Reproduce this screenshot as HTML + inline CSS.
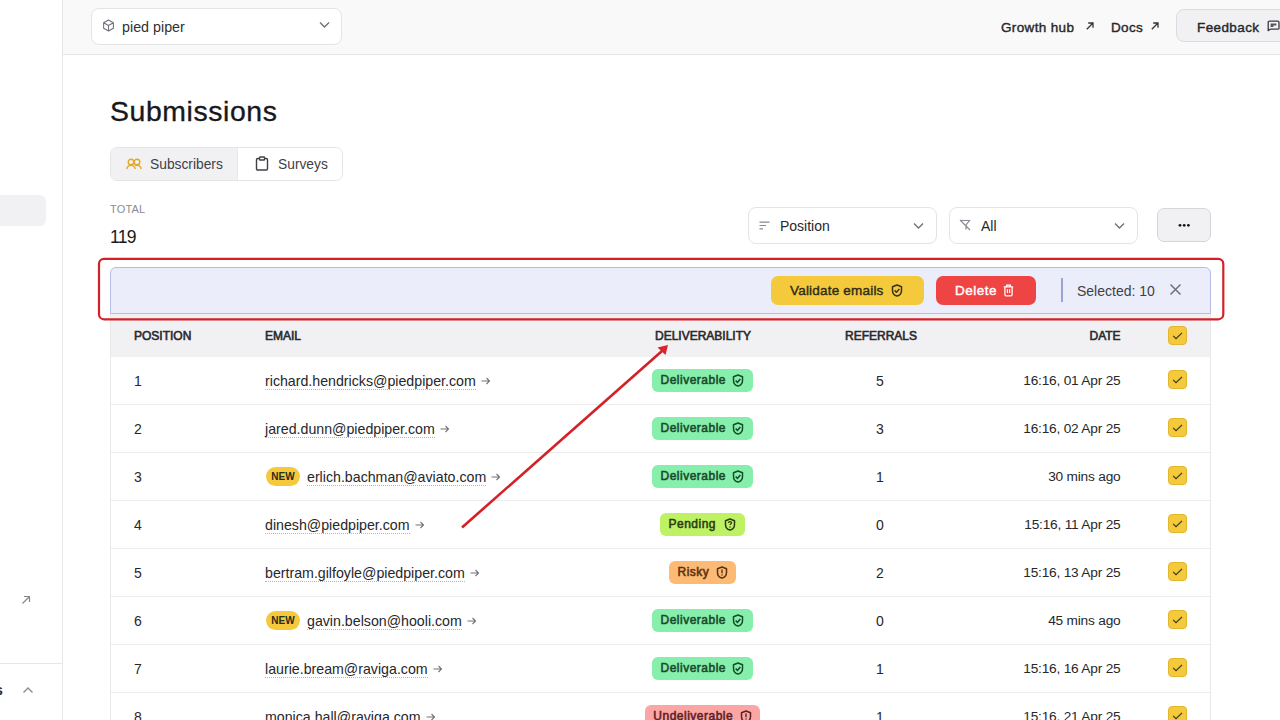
<!DOCTYPE html>
<html><head><meta charset="utf-8">
<style>
*{box-sizing:border-box;margin:0;padding:0}
html,body{width:1280px;height:720px;overflow:hidden;background:#fff;font-family:"Liberation Sans",sans-serif;color:#27272a}
.abs{position:absolute}
svg{display:block}
#sidebar{position:absolute;left:0;top:0;width:63px;height:720px;background:#fff;border-right:1px solid #e6e6e8;z-index:2}
#topbar{position:absolute;left:62px;top:0;width:1218px;z-index:1;height:55px;background:#f9f9f9;border-bottom:1px solid #e4e4e7}
.sel{position:absolute;background:#fff;border:1px solid #e4e4e7;border-radius:8px}
.txt{position:absolute;white-space:nowrap;line-height:1}
.hdr{position:absolute;white-space:nowrap;font-size:12px;font-weight:400;-webkit-text-stroke:0.6px currentColor;color:#2a2a2e;line-height:1}
.row{position:absolute;left:110px;width:1101px;height:48px;border-bottom:1px solid #ececee}
.cell{position:absolute;white-space:nowrap;font-size:14px;line-height:1;color:#27272a}
.email{border-bottom:1px dotted #b4b4bb;padding-bottom:0}
.badge{position:absolute;height:23px;border-radius:6px;font-size:12px;font-weight:400;-webkit-text-stroke:0.55px currentColor;color:#1d4430;line-height:23px;white-space:nowrap}
.cb{position:absolute;left:1058px;width:19px;height:19px;background:#f4ca3c;border:1px solid #e3b630;border-radius:4px}
.new{position:absolute;height:19px;width:34px;border-radius:10px;background:#f4ca3c;font-size:10px;font-weight:700;color:#2b2b18;text-align:center;line-height:19px}
</style></head>
<body>
<div id="sidebar">
  <div class="abs" style="left:0;top:195px;width:46px;height:31px;background:#f1f1f3;border-radius:0 6px 6px 0"></div>
  <svg class="abs" style="left:20px;top:594px" width="12" height="12" viewBox="0 0 12 12"><path d="M2.5 9.5L9.5 2.5M4 2.5h5.5V8" fill="none" stroke="#85858c" stroke-width="1.2"/></svg>
  <div class="abs" style="left:0;top:663px;width:62px;height:1px;background:#e6e6e8"></div>
  <div class="txt" style="left:-5px;top:683px;font-size:14px;font-weight:700;color:#27272a">s</div>
  <svg class="abs" style="left:22px;top:686px" width="12" height="8" viewBox="0 0 12 8"><path d="M1.5 6.5L6 2l4.5 4.5" fill="none" stroke="#8a8a90" stroke-width="1.3"/></svg>
</div>

<div id="topbar">
  <div class="sel" style="left:29px;top:8px;width:251px;height:37px"></div>
  <svg class="abs" style="left:40px;top:19px" width="13" height="13" viewBox="0 0 24 24"><path d="M12 2l9 5v10l-9 5-9-5V7z M3 7l9 5 9-5 M12 12v10" fill="none" stroke="#71717a" stroke-width="2" stroke-linejoin="round"/></svg>
  <div class="txt" style="left:60px;top:20px;font-size:14.3px;color:#303033">pied piper</div>
  <svg class="abs" style="left:257px;top:21px" width="11" height="8" viewBox="0 0 11 8"><path d="M1 1.5l4.5 4.5L10 1.5" fill="none" stroke="#71717a" stroke-width="1.4"/></svg>

  <div class="txt" style="left:939px;top:21px;font-size:13.5px;font-weight:400;-webkit-text-stroke:0.4px currentColor;letter-spacing:0.35px;color:#27272a">Growth hub</div>
  <svg class="abs" style="left:1023px;top:21px" width="10" height="10" viewBox="0 0 10 10"><path d="M1.8 8.2L8 2M3.2 2H8v4.8" fill="none" stroke="#333338" stroke-width="1.3"/></svg>
  <div class="txt" style="left:1049px;top:21px;font-size:13.5px;font-weight:400;-webkit-text-stroke:0.4px currentColor;letter-spacing:0.35px;color:#27272a">Docs</div>
  <svg class="abs" style="left:1088px;top:21px" width="10" height="10" viewBox="0 0 10 10"><path d="M1.8 8.2L8 2M3.2 2H8v4.8" fill="none" stroke="#333338" stroke-width="1.3"/></svg>
  <div class="abs" style="left:1114px;top:9px;width:130px;height:33px;background:#f1f1f3;border:1px solid #dcdce0;border-radius:8px"></div>
  <div class="txt" style="left:1135px;top:21px;font-size:13.5px;font-weight:400;-webkit-text-stroke:0.4px currentColor;letter-spacing:0.4px;color:#27272a">Feedback</div>
  <svg class="abs" style="left:1205px;top:19.5px" width="13" height="12" viewBox="0 0 13 12"><path d="M1.2 10.6V2.4c0-0.7 0.5-1.2 1.2-1.2h8.4c0.7 0 1.2 0.5 1.2 1.2v5.6c0 0.7-0.5 1.2-1.2 1.2H3.2z" fill="none" stroke="#3a3a40" stroke-width="1.3" stroke-linejoin="round"/><path d="M3.6 3.4h5.8v2.2H6.4v1.3H3.6z" fill="#55555c"/></svg>
</div>

<!-- Title -->
<div class="txt" style="left:110px;top:96.5px;font-size:28.4px;letter-spacing:0.6px;color:#18181b;-webkit-text-stroke:0.35px #18181b">Submissions</div>

<!-- Tabs -->
<div class="abs" style="left:110px;top:147px;width:233px;height:34px;border:1px solid #e4e4e7;border-radius:7px;overflow:hidden;background:#fff">
  <div class="abs" style="left:0;top:0;width:127px;height:32px;background:#f1f1f3;border-right:1px solid #e8e8ea"></div>
</div>
<svg class="abs" style="left:126px;top:157.5px" width="16" height="12" viewBox="0 0 16 12"><circle cx="5" cy="4" r="2.8" fill="none" stroke="#e0a92a" stroke-width="1.4"/><circle cx="11" cy="4" r="2.8" fill="none" stroke="#e0a92a" stroke-width="1.4"/><path d="M0.8 11c0.5-2.5 2-3.6 4.2-3.6s3.7 1.1 4.2 3.6M9.2 7.6c0.6-0.2 1.2-0.2 1.8-0.2 2.2 0 3.7 1.1 4.2 3.6" fill="none" stroke="#e0a92a" stroke-width="1.4"/></svg>
<div class="txt" style="left:150px;top:158px;font-size:13.8px;color:#3f3f46">Subscribers</div>
<svg class="abs" style="left:255px;top:156px" width="14" height="15" viewBox="0 0 14 15"><rect x="1.5" y="2.5" width="11" height="11.5" rx="1.2" fill="none" stroke="#3f3f46" stroke-width="1.4"/><rect x="4.5" y="1" width="5" height="3" rx="0.6" fill="#fff" stroke="#3f3f46" stroke-width="1.3"/></svg>
<div class="txt" style="left:278px;top:158px;font-size:13.8px;color:#3f3f46">Surveys</div>

<!-- total -->
<div class="txt" style="left:110px;top:204px;font-size:11px;color:#8b8b93;letter-spacing:0.2px">TOTAL</div>
<div class="txt" style="left:110px;top:228.5px;font-size:17.5px;color:#18181b;letter-spacing:-0.7px">119</div>

<!-- selects -->
<div class="sel" style="left:748px;top:207px;width:189px;height:37px"></div>
<svg class="abs" style="left:759px;top:221px" width="11" height="9" viewBox="0 0 11 9"><path d="M0.5 1.2h10M0.5 4.5h6.5M0.5 7.8h3.5" fill="none" stroke="#8b8b93" stroke-width="1.2"/></svg>
<div class="txt" style="left:780px;top:219px;font-size:14px;color:#27272a">Position</div>
<svg class="abs" style="left:913px;top:222px" width="11" height="8" viewBox="0 0 11 8"><path d="M1 1.5l4.5 4.5L10 1.5" fill="none" stroke="#71717a" stroke-width="1.4"/></svg>

<div class="sel" style="left:949px;top:207px;width:189px;height:37px"></div>
<svg class="abs" style="left:959px;top:219px" width="12" height="12" viewBox="0 0 12 12"><path d="M1.5 1.5h9L7 6v4.5M1 1l10 10" fill="none" stroke="#8b8b93" stroke-width="1.2"/></svg>
<div class="txt" style="left:981px;top:219px;font-size:14px;color:#27272a">All</div>
<svg class="abs" style="left:1114px;top:222px" width="11" height="8" viewBox="0 0 11 8"><path d="M1 1.5l4.5 4.5L10 1.5" fill="none" stroke="#71717a" stroke-width="1.4"/></svg>

<div class="abs" style="left:1157px;top:208px;width:54px;height:34px;background:#f1f1f3;border:1.5px solid #d6d6da;border-radius:7px"></div>
<svg class="abs" style="left:1177px;top:223px" width="14" height="5" viewBox="0 0 14 5"><circle cx="3" cy="2.3" r="1.4" fill="#18181b"/><circle cx="7.2" cy="2.3" r="1.4" fill="#18181b"/><circle cx="11.4" cy="2.3" r="1.4" fill="#18181b"/></svg>

<!-- table -->
<div class="abs" style="left:110px;top:313px;width:1101px;height:44px;background:#f1f1f3"></div>
<div class="hdr" style="left:134px;top:330px">POSITION</div>
<div class="hdr" style="left:265px;top:330px">EMAIL</div>
<div class="hdr" style="left:655px;top:330px">DELIVERABILITY</div>
<div class="hdr" style="left:845px;top:330px">REFERRALS</div>
<div class="hdr" style="left:1089.5px;top:330px">DATE</div>
<div class="cb" style="left:1168px;top:326px"><svg width="17" height="17" viewBox="0 0 17 17"><path d="M4.2 8.9l2.8 2.8 6-5.9" fill="none" stroke="#3d3519" stroke-width="1.15"/></svg></div>

<!--ROWS-->
<div class="row" style="top:357px"></div>
<div class="cell" style="left:134px;top:374px">1</div>
<div class="cell" style="left:265px;top:374px;font-size:14.2px"><span class="email">richard.hendricks@piedpiper.com</span><svg width="10" height="8" viewBox="0 0 10 8" style="display:inline-block;margin-left:5px;vertical-align:1.5px"><path d="M0.5 4h8M5.5 1l3 3-3 3" fill="none" stroke="#71717a" stroke-width="1.1"/></svg></div>
<div class="badge" style="left:652px;top:369px;width:101px;background:#86efac;color:#1b4a2d;padding-left:8.5px;letter-spacing:0.5px">Deliverable<svg width="12" height="13" viewBox="0 0 12 13" style="position:absolute;right:9px;top:4.6px"><path d="M6 1L1.5 2.8v3.6c0 3 1.9 4.9 4.5 5.6 2.6-0.7 4.5-2.6 4.5-5.6V2.8z" fill="none" stroke="#1b4a2d" stroke-width="1.5" stroke-linejoin="round"/><path d="M3.6 6.5l1.8 1.8 3-3.2" fill="none" stroke="#1b4a2d" stroke-width="1.5"/></svg></div>
<div class="cell" style="left:830px;width:100px;text-align:center;top:374px">5</div>
<div class="cell" style="left:921px;width:200px;text-align:right;top:374px;font-size:13.7px;letter-spacing:-0.2px;width:199.5px">16:16, 01 Apr 25</div>
<div class="cb" style="left:1168px;top:370px"><svg width="17" height="17" viewBox="0 0 17 17"><path d="M4.2 8.9l2.8 2.8 6-5.9" fill="none" stroke="#3d3519" stroke-width="1.15"/></svg></div>
<div class="row" style="top:405px"></div>
<div class="cell" style="left:134px;top:422px">2</div>
<div class="cell" style="left:265px;top:422px;font-size:14.2px"><span class="email">jared.dunn@piedpiper.com</span><svg width="10" height="8" viewBox="0 0 10 8" style="display:inline-block;margin-left:5px;vertical-align:1.5px"><path d="M0.5 4h8M5.5 1l3 3-3 3" fill="none" stroke="#71717a" stroke-width="1.1"/></svg></div>
<div class="badge" style="left:652px;top:417px;width:101px;background:#86efac;color:#1b4a2d;padding-left:8.5px;letter-spacing:0.5px">Deliverable<svg width="12" height="13" viewBox="0 0 12 13" style="position:absolute;right:9px;top:4.6px"><path d="M6 1L1.5 2.8v3.6c0 3 1.9 4.9 4.5 5.6 2.6-0.7 4.5-2.6 4.5-5.6V2.8z" fill="none" stroke="#1b4a2d" stroke-width="1.5" stroke-linejoin="round"/><path d="M3.6 6.5l1.8 1.8 3-3.2" fill="none" stroke="#1b4a2d" stroke-width="1.5"/></svg></div>
<div class="cell" style="left:830px;width:100px;text-align:center;top:422px">3</div>
<div class="cell" style="left:921px;width:200px;text-align:right;top:422px;font-size:13.7px;letter-spacing:-0.2px;width:199.5px">16:16, 02 Apr 25</div>
<div class="cb" style="left:1168px;top:418px"><svg width="17" height="17" viewBox="0 0 17 17"><path d="M4.2 8.9l2.8 2.8 6-5.9" fill="none" stroke="#3d3519" stroke-width="1.15"/></svg></div>
<div class="row" style="top:453px"></div>
<div class="cell" style="left:134px;top:470px">3</div>
<div class="new" style="left:266px;top:467px">NEW</div>
<div class="cell" style="left:307px;top:470px;font-size:14.2px"><span class="email">erlich.bachman@aviato.com</span><svg width="10" height="8" viewBox="0 0 10 8" style="display:inline-block;margin-left:5px;vertical-align:1.5px"><path d="M0.5 4h8M5.5 1l3 3-3 3" fill="none" stroke="#71717a" stroke-width="1.1"/></svg></div>
<div class="badge" style="left:652px;top:465px;width:101px;background:#86efac;color:#1b4a2d;padding-left:8.5px;letter-spacing:0.5px">Deliverable<svg width="12" height="13" viewBox="0 0 12 13" style="position:absolute;right:9px;top:4.6px"><path d="M6 1L1.5 2.8v3.6c0 3 1.9 4.9 4.5 5.6 2.6-0.7 4.5-2.6 4.5-5.6V2.8z" fill="none" stroke="#1b4a2d" stroke-width="1.5" stroke-linejoin="round"/><path d="M3.6 6.5l1.8 1.8 3-3.2" fill="none" stroke="#1b4a2d" stroke-width="1.5"/></svg></div>
<div class="cell" style="left:830px;width:100px;text-align:center;top:470px">1</div>
<div class="cell" style="left:921px;width:200px;text-align:right;top:470px;font-size:13.7px;letter-spacing:-0.2px;width:199.5px">30 mins ago</div>
<div class="cb" style="left:1168px;top:466px"><svg width="17" height="17" viewBox="0 0 17 17"><path d="M4.2 8.9l2.8 2.8 6-5.9" fill="none" stroke="#3d3519" stroke-width="1.15"/></svg></div>
<div class="row" style="top:501px"></div>
<div class="cell" style="left:134px;top:518px">4</div>
<div class="cell" style="left:265px;top:518px;font-size:14.2px"><span class="email">dinesh@piedpiper.com</span><svg width="10" height="8" viewBox="0 0 10 8" style="display:inline-block;margin-left:5px;vertical-align:1.5px"><path d="M0.5 4h8M5.5 1l3 3-3 3" fill="none" stroke="#71717a" stroke-width="1.1"/></svg></div>
<div class="badge" style="left:660px;top:513px;width:85px;background:#bef264;color:#2b3d12;padding-left:8.5px;letter-spacing:0.5px">Pending<svg width="12" height="13" viewBox="0 0 12 13" style="position:absolute;right:9.5px;top:4.6px"><path d="M6 1L1.5 2.8v3.6c0 3 1.9 4.9 4.5 5.6 2.6-0.7 4.5-2.6 4.5-5.6V2.8z" fill="none" stroke="#2b3d12" stroke-width="1.5" stroke-linejoin="round"/><path d="M4.5 5.1c0-1 0.6-1.6 1.5-1.6s1.5 0.6 1.5 1.4c0 1-1.5 1.1-1.5 2.2" fill="none" stroke="#2b3d12" stroke-width="1.25"/><circle cx="6" cy="9" r="0.75" fill="#2b3d12"/></svg></div>
<div class="cell" style="left:830px;width:100px;text-align:center;top:518px">0</div>
<div class="cell" style="left:921px;width:200px;text-align:right;top:518px;font-size:13.7px;letter-spacing:-0.2px;width:199.5px">15:16, 11 Apr 25</div>
<div class="cb" style="left:1168px;top:514px"><svg width="17" height="17" viewBox="0 0 17 17"><path d="M4.2 8.9l2.8 2.8 6-5.9" fill="none" stroke="#3d3519" stroke-width="1.15"/></svg></div>
<div class="row" style="top:549px"></div>
<div class="cell" style="left:134px;top:566px">5</div>
<div class="cell" style="left:265px;top:566px;font-size:14.2px"><span class="email">bertram.gilfoyle@piedpiper.com</span><svg width="10" height="8" viewBox="0 0 10 8" style="display:inline-block;margin-left:5px;vertical-align:1.5px"><path d="M0.5 4h8M5.5 1l3 3-3 3" fill="none" stroke="#71717a" stroke-width="1.1"/></svg></div>
<div class="badge" style="left:669px;top:561px;width:67px;background:#fdba74;color:#5a3212;padding-left:8.5px;letter-spacing:0.5px">Risky<svg width="12" height="13" viewBox="0 0 12 13" style="position:absolute;right:8.5px;top:4.6px"><path d="M6 1L1.5 2.8v3.6c0 3 1.9 4.9 4.5 5.6 2.6-0.7 4.5-2.6 4.5-5.6V2.8z" fill="none" stroke="#5a3212" stroke-width="1.5" stroke-linejoin="round"/><path d="M6 3.5v3.8" fill="none" stroke="#5a3212" stroke-width="1.4"/><circle cx="6" cy="9" r="0.75" fill="#5a3212"/></svg></div>
<div class="cell" style="left:830px;width:100px;text-align:center;top:566px">2</div>
<div class="cell" style="left:921px;width:200px;text-align:right;top:566px;font-size:13.7px;letter-spacing:-0.2px;width:199.5px">15:16, 13 Apr 25</div>
<div class="cb" style="left:1168px;top:562px"><svg width="17" height="17" viewBox="0 0 17 17"><path d="M4.2 8.9l2.8 2.8 6-5.9" fill="none" stroke="#3d3519" stroke-width="1.15"/></svg></div>
<div class="row" style="top:597px"></div>
<div class="cell" style="left:134px;top:614px">6</div>
<div class="new" style="left:266px;top:611px">NEW</div>
<div class="cell" style="left:307px;top:614px;font-size:14.2px"><span class="email">gavin.belson@hooli.com</span><svg width="10" height="8" viewBox="0 0 10 8" style="display:inline-block;margin-left:5px;vertical-align:1.5px"><path d="M0.5 4h8M5.5 1l3 3-3 3" fill="none" stroke="#71717a" stroke-width="1.1"/></svg></div>
<div class="badge" style="left:652px;top:609px;width:101px;background:#86efac;color:#1b4a2d;padding-left:8.5px;letter-spacing:0.5px">Deliverable<svg width="12" height="13" viewBox="0 0 12 13" style="position:absolute;right:9px;top:4.6px"><path d="M6 1L1.5 2.8v3.6c0 3 1.9 4.9 4.5 5.6 2.6-0.7 4.5-2.6 4.5-5.6V2.8z" fill="none" stroke="#1b4a2d" stroke-width="1.5" stroke-linejoin="round"/><path d="M3.6 6.5l1.8 1.8 3-3.2" fill="none" stroke="#1b4a2d" stroke-width="1.5"/></svg></div>
<div class="cell" style="left:830px;width:100px;text-align:center;top:614px">0</div>
<div class="cell" style="left:921px;width:200px;text-align:right;top:614px;font-size:13.7px;letter-spacing:-0.2px;width:199.5px">45 mins ago</div>
<div class="cb" style="left:1168px;top:610px"><svg width="17" height="17" viewBox="0 0 17 17"><path d="M4.2 8.9l2.8 2.8 6-5.9" fill="none" stroke="#3d3519" stroke-width="1.15"/></svg></div>
<div class="row" style="top:645px"></div>
<div class="cell" style="left:134px;top:662px">7</div>
<div class="cell" style="left:265px;top:662px;font-size:14.2px"><span class="email">laurie.bream@raviga.com</span><svg width="10" height="8" viewBox="0 0 10 8" style="display:inline-block;margin-left:5px;vertical-align:1.5px"><path d="M0.5 4h8M5.5 1l3 3-3 3" fill="none" stroke="#71717a" stroke-width="1.1"/></svg></div>
<div class="badge" style="left:652px;top:657px;width:101px;background:#86efac;color:#1b4a2d;padding-left:8.5px;letter-spacing:0.5px">Deliverable<svg width="12" height="13" viewBox="0 0 12 13" style="position:absolute;right:9px;top:4.6px"><path d="M6 1L1.5 2.8v3.6c0 3 1.9 4.9 4.5 5.6 2.6-0.7 4.5-2.6 4.5-5.6V2.8z" fill="none" stroke="#1b4a2d" stroke-width="1.5" stroke-linejoin="round"/><path d="M3.6 6.5l1.8 1.8 3-3.2" fill="none" stroke="#1b4a2d" stroke-width="1.5"/></svg></div>
<div class="cell" style="left:830px;width:100px;text-align:center;top:662px">1</div>
<div class="cell" style="left:921px;width:200px;text-align:right;top:662px;font-size:13.7px;letter-spacing:-0.2px;width:199.5px">15:16, 16 Apr 25</div>
<div class="cb" style="left:1168px;top:658px"><svg width="17" height="17" viewBox="0 0 17 17"><path d="M4.2 8.9l2.8 2.8 6-5.9" fill="none" stroke="#3d3519" stroke-width="1.15"/></svg></div>
<div class="row" style="top:693px"></div>
<div class="cell" style="left:134px;top:710px">8</div>
<div class="cell" style="left:265px;top:710px;font-size:14.2px"><span class="email">monica.hall@raviga.com</span><svg width="10" height="8" viewBox="0 0 10 8" style="display:inline-block;margin-left:5px;vertical-align:1.5px"><path d="M0.5 4h8M5.5 1l3 3-3 3" fill="none" stroke="#71717a" stroke-width="1.1"/></svg></div>
<div class="badge" style="left:645px;top:705px;width:115px;background:#fca5a5;color:#5c2222;padding-left:8.3px;letter-spacing:0.5px">Undeliverable<svg width="12" height="13" viewBox="0 0 12 13" style="position:absolute;right:8.5px;top:4.6px"><path d="M6 1L1.5 2.8v3.6c0 3 1.9 4.9 4.5 5.6 2.6-0.7 4.5-2.6 4.5-5.6V2.8z" fill="none" stroke="#5c2222" stroke-width="1.5" stroke-linejoin="round"/><path d="M6 3.5v3.8" fill="none" stroke="#5c2222" stroke-width="1.4"/><circle cx="6" cy="9" r="0.75" fill="#5c2222"/></svg></div>
<div class="cell" style="left:830px;width:100px;text-align:center;top:710px">1</div>
<div class="cell" style="left:921px;width:200px;text-align:right;top:710px;font-size:13.7px;letter-spacing:-0.2px;width:199.5px">15:16, 21 Apr 25</div>
<div class="cb" style="left:1168px;top:706px"><svg width="17" height="17" viewBox="0 0 17 17"><path d="M4.2 8.9l2.8 2.8 6-5.9" fill="none" stroke="#3d3519" stroke-width="1.15"/></svg></div>
<!--/ROWS-->
<div class="abs" style="left:110px;top:314px;width:1101px;height:420px;border-left:1px solid #e8e8ea;border-right:1px solid #e8e8ea"></div>


<!-- selection bar -->
<div class="abs" style="left:110px;top:267px;width:1101px;height:47px;background:#ecedfb;border:1px solid #b6bce6;border-radius:6px 6px 0 0"></div>
<div class="abs" style="left:771px;top:275.5px;width:153px;height:29.5px;background:#f4ca3c;border-radius:7px"></div>
<div class="txt" style="left:790px;top:284px;font-size:13.5px;font-weight:400;-webkit-text-stroke:0.4px currentColor;letter-spacing:0.2px;color:#2e2a18">Validate emails</div>
<svg class="abs" style="left:891px;top:283.5px" width="12" height="13" viewBox="0 0 12 13"><path d="M6 1L1.5 2.8v3.6c0 3 1.9 4.9 4.5 5.6 2.6-0.7 4.5-2.6 4.5-5.6V2.8z M3.6 6.4l1.8 1.8 3-3.2" fill="none" stroke="#3a3218" stroke-width="1.5" stroke-linejoin="round"/></svg>
<div class="abs" style="left:936px;top:275.5px;width:100px;height:29.5px;background:#ef4444;border-radius:7px"></div>
<div class="txt" style="left:955px;top:284px;font-size:13.5px;font-weight:400;-webkit-text-stroke:0.4px currentColor;letter-spacing:0.5px;color:#fff">Delete</div>
<svg class="abs" style="left:1003px;top:283.5px" width="11" height="13" viewBox="0 0 11 13"><path d="M0.8 2.8h9.4 M3.6 2.8V1.2h3.8v1.6 M1.9 2.8v7.6c0 0.8 0.5 1.4 1.3 1.4h4.6c0.8 0 1.3-0.6 1.3-1.4V2.8 M4.4 5.3v3.8 M6.6 5.3v3.8" fill="none" stroke="#fff" stroke-width="1.25"/></svg>
<div class="abs" style="left:1061px;top:278px;width:2px;height:24px;background:#9ea3d6"></div>
<div class="txt" style="left:1077px;top:284px;font-size:14px;color:#3f3f46">Selected: 10</div>
<svg class="abs" style="left:1169px;top:283px" width="13" height="13" viewBox="0 0 13 13"><path d="M1.5 1.5l10 10M11.5 1.5l-10 10" fill="none" stroke="#71717a" stroke-width="1.5"/></svg>

<!-- annotation -->
<svg class="abs" style="left:0;top:0" width="1280" height="720" viewBox="0 0 1280 720">
  <rect x="99" y="258.8" width="1124.3" height="60.5" rx="5" fill="none" stroke="#d42128" stroke-width="2.2"/>
  <path d="M462 527.5L662 351" stroke="#d42128" stroke-width="2.6" fill="none"/>
  <path d="M668 345L657.5 347.5L665.5 355z" fill="#d9252b"/>
</svg>
</body></html>
